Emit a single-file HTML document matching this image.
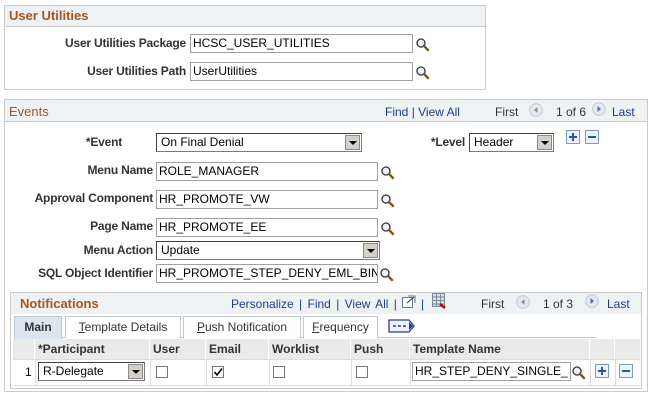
<!DOCTYPE html>
<html><head><style>
*{box-sizing:border-box;margin:0;padding:0}
body{width:656px;height:403px;background:#fff;font-family:"Liberation Sans",Arial,sans-serif;font-size:12px;color:#000;position:relative;overflow:hidden}
.a{position:absolute}
.box{position:absolute;border:1px solid #cbcbcb}
.hdr{position:absolute;background:#eef2f5;border-bottom:1px solid #cbcbcb}
.ttl{position:absolute;color:#a9541c;font-size:13px}
.lbl{position:absolute;font-weight:bold;color:#333;text-align:right;font-size:12px;letter-spacing:-0.2px}
.inp{position:absolute;border:1px solid #a0a0a0;background:#fff;height:19px;line-height:17px;padding-left:2px;font-size:12px;color:#000;white-space:nowrap;overflow:hidden}
.sel{position:absolute;border:1px solid #7a7a7a;border-top-color:#404040;border-left-color:#404040;background:#fff;height:19px;line-height:17px;padding-left:4px;font-size:12px}
.sel i{position:absolute;right:1px;top:1px;width:15px;height:15px;background:#d4d0c8;border:1px solid #888}
.sel i:after{content:"";position:absolute;left:3px;top:5px;border-left:4px solid transparent;border-right:4px solid transparent;border-top:4px solid #000}
.lk{position:absolute;color:#1a3d8f;font-size:12px;white-space:nowrap}
.sep{color:#1a3d8f}
.nav{position:absolute;color:#333;font-size:12px;white-space:nowrap}
.circ{position:absolute;width:14px;height:14px}
.btn{position:absolute;width:14px;height:14px;border:1px solid #7b9cc0;background:#eef3f9}
.gh{position:absolute;background:#eaeaea;border-right:1px solid #fff;font-weight:bold;color:#333;height:20px;line-height:20px;padding-left:3px}
.cb{position:absolute;width:12px;height:12px;border:1px solid #777;background:#fff}
.tab{position:absolute;top:316px;height:22px;border:1px solid #bcc8d4;border-bottom:none;background:#fff;line-height:20px;text-align:center;color:#333;font-size:12px}
</style></head><body>
<svg width="0" height="0" style="position:absolute"><defs>
<g id="mg"><circle cx="5" cy="5" r="4" fill="#eef4fb" stroke="#333" stroke-width="1.3"/><line x1="8" y1="8" x2="12" y2="12" stroke="#7a5a10" stroke-width="2.4" stroke-linecap="round"/></g>
<g id="cl"><circle cx="7" cy="7" r="6.3" fill="#e6e9ec" stroke="#c4c8cc"/><path d="M8.5 4L5 7L8.5 10Z" fill="#8a8e94"/></g>
<g id="cr"><circle cx="7" cy="7" r="6.3" fill="#e6e9ec" stroke="#c4c8cc"/><path d="M5.5 4L9 7L5.5 10Z" fill="#5070b0"/></g>
</defs></svg>

<!-- User Utilities -->
<div class="box" style="left:4px;top:5px;width:482px;height:85px"></div>
<div class="hdr" style="left:5px;top:6px;width:480px;height:21px"></div>
<div class="ttl" style="left:9px;top:8px;font-weight:bold">User Utilities</div>
<div class="lbl" style="left:20px;top:36px;width:166px">User Utilities Package</div>
<div class="inp" style="left:190px;top:34px;width:223px">HCSC_USER_UTILITIES</div>
<svg class="a" style="left:416px;top:38px" width="14" height="14"><use href="#mg"/></svg>
<div class="lbl" style="left:20px;top:64px;width:166px">User Utilities Path</div>
<div class="inp" style="left:190px;top:62px;width:223px">UserUtilities</div>
<svg class="a" style="left:416px;top:66px" width="14" height="14"><use href="#mg"/></svg>

<!-- Events -->
<div class="box" style="left:4px;top:99px;width:644px;height:293px"></div>
<div class="hdr" style="left:5px;top:100px;width:642px;height:22px"></div>
<div class="ttl" style="left:9px;top:104px;font-size:13px">Events</div>
<div class="lk" style="left:385px;top:105px">Find <span class="sep">|</span> View All</div>
<div class="nav" style="left:495px;top:105px">First</div>
<svg class="circ" style="left:529px;top:103px"><use href="#cl"/></svg>
<div class="nav" style="left:556px;top:105px">1 of 6</div>
<svg class="circ" style="left:592px;top:102px"><use href="#cr"/></svg>
<div class="lk" style="left:612px;top:105px">Last</div>

<div class="lbl" style="left:60px;top:135px;width:62px">*Event</div>
<div class="sel" style="left:156px;top:133px;width:206px">On Final Denial<i></i></div>
<div class="lbl" style="left:400px;top:135px;width:65px">*Level</div>
<div class="sel" style="left:469px;top:133px;width:85px">Header<i></i></div>
<div class="btn" style="left:566px;top:130px"><svg width="12" height="12"><path d="M6 2V10M2 6H10" stroke="#2457a6" stroke-width="2"/></svg></div>
<div class="btn" style="left:585px;top:130px"><svg width="12" height="12"><path d="M2 6H10" stroke="#2457a6" stroke-width="2"/></svg></div>

<div class="lbl" style="left:20px;top:163px;width:133px">Menu Name</div>
<div class="inp" style="left:156px;top:162px;width:222px">ROLE_MANAGER</div>
<svg class="a" style="left:381px;top:166px" width="14" height="14"><use href="#mg"/></svg>
<div class="lbl" style="left:20px;top:191px;width:133px">Approval Component</div>
<div class="inp" style="left:156px;top:190px;width:222px">HR_PROMOTE_VW</div>
<svg class="a" style="left:381px;top:194px" width="14" height="14"><use href="#mg"/></svg>
<div class="lbl" style="left:20px;top:219px;width:133px">Page Name</div>
<div class="inp" style="left:156px;top:218px;width:222px">HR_PROMOTE_EE</div>
<svg class="a" style="left:381px;top:222px" width="14" height="14"><use href="#mg"/></svg>
<div class="lbl" style="left:20px;top:243px;width:133px">Menu Action</div>
<div class="sel" style="left:156px;top:241px;width:224px">Update<i></i></div>
<div class="lbl" style="left:20px;top:266px;width:133px">SQL Object Identifier</div>
<div class="inp" style="left:156px;top:264px;width:222px">HR_PROMOTE_STEP_DENY_EML_BIN</div>
<svg class="a" style="left:380px;top:268px" width="14" height="14"><use href="#mg"/></svg>

<!-- Notifications -->
<div class="box" style="left:10px;top:292px;width:632px;height:97px"></div>
<div class="hdr" style="left:11px;top:293px;width:630px;height:21px;border-bottom:none"></div>
<div class="ttl" style="left:20px;top:296px;font-weight:bold">Notifications</div>
<div class="lk" style="left:231px;top:297px;word-spacing:2px">Personalize <span class="sep">|</span> Find <span class="sep">|</span> View All <span class="sep">|</span></div>
<svg class="a" style="left:402px;top:295px" width="14" height="13"><rect x="0.5" y="2.5" width="10" height="10" fill="#fff" stroke="#6a7a90"/><path d="M6 1H13V8" fill="none" stroke="#6a7a90"/><path d="M5 8L12 2" stroke="#333"/></svg>
<div class="lk" style="left:421px;top:297px">|</div>
<svg class="a" style="left:432px;top:293px" width="14" height="16"><rect x="0.5" y="0.5" width="12" height="13" fill="#d8e0ea" stroke="#7a8aa0"/><path d="M0 4H13M0 7.5H13M0 11H13M4.5 0V14M8.5 0V14" stroke="#7a8aa0"/><path d="M8 11L13 15" stroke="#c00" stroke-width="2.5"/></svg>
<div class="nav" style="left:481px;top:297px">First</div>
<svg class="circ" style="left:516px;top:295px"><use href="#cl"/></svg>
<div class="nav" style="left:543px;top:297px">1 of 3</div>
<svg class="circ" style="left:585px;top:294px"><use href="#cr"/></svg>
<div class="lk" style="left:607px;top:297px">Last</div>

<div class="a" style="left:14px;top:337px;width:582px;height:1px;background:#bcc8d4"></div>
<div class="tab" style="left:14px;width:48px;background:#dde6ef;font-weight:bold;height:23px">Main</div>
<div class="tab" style="left:65px;width:116px"><u>T</u>emplate Details</div>
<div class="tab" style="left:183px;width:118px"><u>P</u>ush Notification</div>
<div class="tab" style="left:303px;width:75px"><u>F</u>requency</div>
<svg class="a" style="left:388px;top:319px" width="28" height="14"><path d="M1 1H21L26 7L21 13H1Z" fill="#eef2fa" stroke="#2a3d8a" stroke-width="1.3"/><path d="M5 7H8M10 7H13M15 7H18" stroke="#2a3d8a" stroke-width="1.5"/><path d="M21 3L25 7L21 11Z" fill="#2a3d8a"/></svg>

<div class="gh" style="left:13px;top:339px;width:22px"></div>
<div class="gh" style="left:35px;top:339px;width:115px">*Participant</div>
<div class="gh" style="left:150px;top:339px;width:56px">User</div>
<div class="gh" style="left:206px;top:339px;width:63px">Email</div>
<div class="gh" style="left:269px;top:339px;width:82px">Worklist</div>
<div class="gh" style="left:351px;top:339px;width:59px">Push</div>
<div class="gh" style="left:410px;top:339px;width:180px">Template Name</div>
<div class="gh" style="left:590px;top:339px;width:25px"></div>
<div class="gh" style="left:615px;top:339px;width:25px;border-right:none"></div>
<div class="a" style="left:13px;top:359px;width:627px;height:1px;background:#ddd"></div>
<div class="a" style="left:13px;top:385px;width:627px;height:1px;background:#ddd"></div>
<div class="a" style="left:25px;top:365px">1</div>
<div class="a" style="left:35px;top:360px;width:1px;height:25px;background:#ddd"></div>
<div class="sel" style="left:38px;top:362px;width:107px">R-Delegate<i></i></div>
<div class="a" style="left:150px;top:360px;width:1px;height:25px;background:#ddd"></div>
<div class="cb" style="left:156px;top:366px"></div>
<div class="a" style="left:206px;top:360px;width:1px;height:25px;background:#ddd"></div>
<div class="cb" style="left:212px;top:366px"><svg width="10" height="10" style="position:absolute;left:0;top:0"><path d="M1.5 5L4 8L9 1.5" fill="none" stroke="#000" stroke-width="1.6"/></svg></div>
<div class="a" style="left:269px;top:360px;width:1px;height:25px;background:#ddd"></div>
<div class="cb" style="left:273px;top:366px"></div>
<div class="a" style="left:351px;top:360px;width:1px;height:25px;background:#ddd"></div>
<div class="cb" style="left:356px;top:366px"></div>
<div class="a" style="left:410px;top:360px;width:1px;height:25px;background:#ddd"></div>
<div class="inp" style="left:412px;top:362px;width:159px;font-size:12px">HR_STEP_DENY_SINGLE_</div>
<svg class="a" style="left:572px;top:366px" width="14" height="14"><use href="#mg"/></svg>
<div class="a" style="left:590px;top:360px;width:1px;height:25px;background:#ddd"></div>
<div class="btn" style="left:595px;top:364px"><svg width="12" height="12"><path d="M6 2V10M2 6H10" stroke="#2457a6" stroke-width="2"/></svg></div>
<div class="a" style="left:615px;top:360px;width:1px;height:25px;background:#ddd"></div>
<div class="btn" style="left:619px;top:364px"><svg width="12" height="12"><path d="M2 6H10" stroke="#2457a6" stroke-width="2"/></svg></div>
</body></html>
